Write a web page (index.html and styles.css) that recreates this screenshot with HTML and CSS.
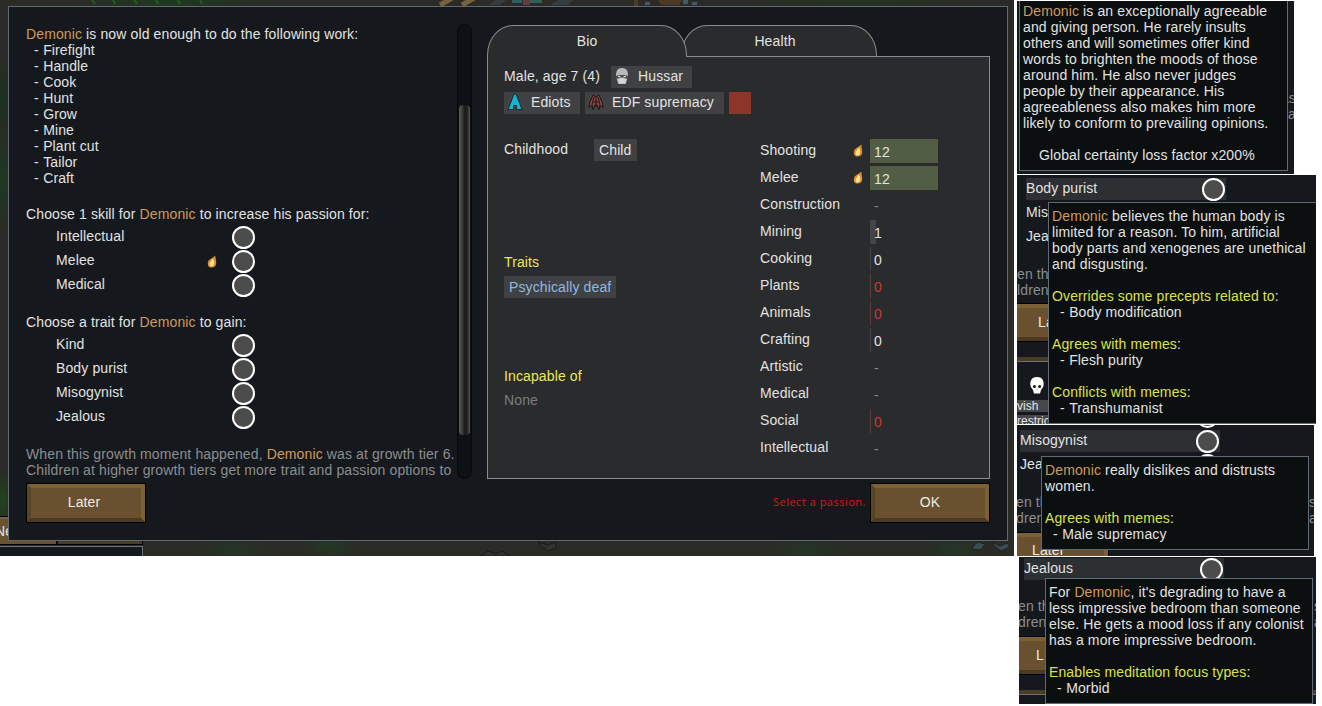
FILE: index.html
```html
<!DOCTYPE html>
<html lang="en">

<head>
    <meta charset="UTF-8">
    <meta name="viewport" content="width=device-width, initial-scale=1.0">
    <title>Growth moment</title>
    <link rel="stylesheet" href="styles.css">
</head>

<body>
    <!-- shared icons -->
    <svg class="defs" width="0" height="0">
        <symbol id="flame" viewBox="0 0 10 13">
            <path d="M8.600 .4 C8 2 9 3 8.800 5 C9.800 8 9.400 12.400 4.800 12.600 C.6 12.600 0 8.400 1.600 5.400 C3.400 3.400 6.600 2.400 8.600 .4z" fill="#e08c30" />
            <path d="M5.600 3.600 C7.800 6 8 11.400 4.800 11.400 C1.800 11.400 2.200 8 4 6.200z" fill="#fbe38e" />
        </symbol>
        <symbol id="skull" viewBox="0 0 16 19">
            <path d="M8 1 C13 1 15 4.500 14.600 9 C14.400 12 12.600 12.600 12 14 L11 17.500 H5 L4 14 C3.400 12.600 1.600 12 1.400 9 C1 4.500 3 1 8 1z" fill="#fff" />
            <circle cx="5.400" cy="10.500" r="1.500" fill="#15191d" />
            <circle cx="10.600" cy="10.500" r="1.500" fill="#15191d" />
            <path d="M8 12.500 V14" stroke="#999" />
        </symbol>
    </svg>

    <main class="scene">
        <svg class="map" width="1014" height="556" viewBox="0 0 1014 556">
            <path d="M92 0 l3 4 M113 0 l2 4 M134 0 l3 4 M156 0 l2 4 M178 0 l2 4 M200 0 l2 4" stroke="#265a23" stroke-width="2" />
            <path d="M440 5 l14 -8 M462 5 l14 -8" stroke="#76633d" stroke-width="5" />
            <path d="M488 5 l8 -5 10 0 -6 5z M550 5 l10 -6 14 0 -6 6z" fill="#343c3f" />
            <path d="M512 0 h10 v3 h-10z M530 0 h12 v3 h-12z" fill="#2f5e5c" />
            <path d="M523 0 h7 v5 h-7z" fill="#643c39" />
            <path d="M658 0 h24 l-3 5 h-18z M634 0 h4 v6 h-4z" fill="#4c3a27" />
            <path d="M645 2 h5 v3 h-5z M683 0 h5 v4 h-5z M692 2 h5 v3 h-5z" fill="#465865" />
            <path d="M538 542 l10 3 8 -3 v6 l-8 3 -6 -4z M480 556 l8 -5 8 3 6 -3 8 5z" fill="#30322f" stroke="#171a18" />
            <path d="M973 546 l5 -4 7 2 -4 6 -9 -1z M992 542 l8 4 7 -3 3 4 -9 4 -6 -4z" fill="#3c4a52" stroke="#1b2022" />
        </svg>
        <div class="hud">
            <div class="hud-tabs"><span class="hud-tab">Ne</span><span class="hud-tab"></span></div>
            <div class="hud-pane"></div>
        </div>

        <section class="dialog">
            <div class="columns">
                <div class="letter">
                    <div class="letter-text">
                        <p><em>Demonic</em> is now old enough to do the following work:</p>
                        <ul class="dashes">
                            <li>Firefight</li>
                            <li>Handle</li>
                            <li>Cook</li>
                            <li>Hunt</li>
                            <li>Grow</li>
                            <li>Mine</li>
                            <li>Plant cut</li>
                            <li>Tailor</li>
                            <li>Craft</li>
                        </ul>
                        <p class="question">Choose 1 skill for <em>Demonic</em> to increase his passion for:</p>
                        <div class="options">
                            <div class="option"><span>Intellectual</span><i class="radio"></i></div>
                            <div class="option"><span>Melee</span><svg class="flame"><use href="#flame" /></svg><i class="radio"></i></div>
                            <div class="option"><span>Medical</span><i class="radio"></i></div>
                        </div>
                        <p class="question second">Choose a trait for <em>Demonic</em> to gain:</p>
                        <div class="options">
                            <div class="option"><span>Kind</span><i class="radio"></i></div>
                            <div class="option"><span>Body purist</span><i class="radio"></i></div>
                            <div class="option"><span>Misogynist</span><i class="radio"></i></div>
                            <div class="option"><span>Jealous</span><i class="radio"></i></div>
                        </div>
                        <p class="note">When this growth moment happened, <em>Demonic</em> was at growth tier 6.<br>Children at higher growth tiers get more trait and passion options to</p>
                    </div>
                    <div class="scrollbar"><div class="thumb"></div></div>
                </div>

                <div class="card">
                    <div class="tabs">
                        <div class="tab active">Bio</div>
                        <div class="tab">Health</div>
                    </div>
                    <div class="panel">
                        <div class="bio">
                            <div class="row">
                                <span class="age">Male, age 7 (4)</span>
                                <span class="chip">
                                    <svg width="16" height="18" viewBox="0 0 16 18">
                                        <path d="M8 1 C12.500 1 14 4 14 8 L13 13 L11.500 17 H4.500 L3 13 L2 8 C2 4 3.500 1 8 1z" fill="#b9b9b9" />
                                        <path d="M1.500 9 C5 7.500 11 7.500 14.500 9 L13 12 L10 10.500 H6 L3 12z" fill="#4b4b4b" />
                                        <path d="M4 9.500 H6.500 M9.500 9.500 H12" stroke="#ddd" />
                                        <path d="M4.500 12 L8 11 L11.500 12 V16.500 H4.500z" fill="#d4d4d4" />
                                    </svg>Hussar</span>
                            </div>
                            <div class="row">
                                <span class="chip ediots">
                                    <svg width="16" height="18" viewBox="0 0 16 18">
                                        <path d="M7 1 H9 L15 16.500 H9.500 V12.500 H6.500 V16.500 H1z" fill="#14b4d2" stroke="#172a30" />
                                    </svg>Ediots</span>
                                <span class="chip edf">
                                    <svg width="16" height="18" viewBox="0 0 16 18">
                                        <path d="M5 2 L8 4 L11 2 L14.500 10 L15 15 L12 12 L11 16.500 L9 12 H7 L5 16.500 L4 12 L1 15 L1.500 10z" fill="#8a4440" stroke="#1d1515" />
                                        <path d="M8 4 V14 M6 4 L4 12 M10 4 L12 12 M5.500 9 H10.500" stroke="#1d1515" fill="none" />
                                    </svg>EDF supremacy</span>
                                <span class="swatch"></span>
                            </div>
                            <div class="row childhood"><span class="age">Childhood</span><span class="chip">Child</span></div>
                            <h2 class="traits">Traits</h2>
                            <div class="row"><span class="chip trait">Psychically deaf</span></div>
                            <h2 class="incapable">Incapable of</h2>
                            <p class="none">None</p>
                        </div>

                        <div class="skills">
                            <div class="skill"><label>Shooting</label><svg class="flame"><use href="#flame" /></svg><span class="level high">12</span></div>
                            <div class="skill"><label>Melee</label><svg class="flame"><use href="#flame" /></svg><span class="level high">12</span></div>
                            <div class="skill"><label>Construction</label><span class="level off">-</span></div>
                            <div class="skill"><label>Mining</label><span class="level one">1</span></div>
                            <div class="skill"><label>Cooking</label><span class="level zero">0</span></div>
                            <div class="skill"><label>Plants</label><span class="level bad">0</span></div>
                            <div class="skill"><label>Animals</label><span class="level bad">0</span></div>
                            <div class="skill"><label>Crafting</label><span class="level zero">0</span></div>
                            <div class="skill"><label>Artistic</label><span class="level off">-</span></div>
                            <div class="skill"><label>Medical</label><span class="level off">-</span></div>
                            <div class="skill"><label>Social</label><span class="level bad">0</span></div>
                            <div class="skill"><label>Intellectual</label><span class="level off">-</span></div>
                        </div>
                    </div>
                </div>
            </div>

            <footer class="buttons">
                <button class="btn">Later</button>
                <span class="warning">Select a passion.</span>
                <button class="btn">OK</button>
            </footer>
        </section>
    </main>

    <aside class="shots">
        <div class="shot kind">
            <p class="edge">as<br>pa</p>
            <div class="tooltip">
                <p><em>Demonic</em> is an exceptionally agreeable<br>and giving person. He rarely insults<br>others and will sometimes offer kind<br>words to brighten the moods of those<br>around him. He also never judges<br>people by their appearance. His<br>agreeableness also makes him more<br>likely to conform to prevailing opinions.</p>
                <p class="factor">Global certainty loss factor x200%</p>
            </div>
        </div>

        <div class="shot purist">
            <div class="options">
                <div class="option hover"><span>Body purist</span><i class="radio"></i></div>
                <div class="option"><span>Mis</span></div>
                <div class="option"><span>Jea</span></div>
            </div>
            <p class="note">en th<br>ldren</p>
            <div class="btn stub">La</div>
            <div class="under">
                <svg class="skull" width="16" height="19"><use href="#skull" /></svg>
                <span class="tag">vish</span>
                <span class="tag">restric</span>
            </div>
            <div class="tooltip">
                <p><em>Demonic</em> believes the human body is<br>limited for a reason. To him, artificial<br>body parts and xenogenes are unethical<br>and disgusting.</p>
                <h3><b>Overrides some precepts related to</b>:</h3>
                <ul class="dashes"><li>Body modification</li></ul>
                <h3><b>Agrees with memes</b>:</h3>
                <ul class="dashes"><li>Flesh purity</li></ul>
                <h3><b>Conflicts with memes</b>:</h3>
                <ul class="dashes"><li>Transhumanist</li></ul>
            </div>
        </div>

        <div class="shot misogynist">
            <i class="radio above"></i>
            <div class="options">
                <div class="option hover"><span>Misogynist</span><i class="radio"></i></div>
                <div class="option"><span>Jea</span><i class="radio"></i></div>
            </div>
            <div class="note split"><p>en th<br>dren</p><p>s<br>a</p></div>
            <div class="btn stub">Later</div>
            <div class="tooltip">
                <p><em>Demonic</em> really dislikes and distrusts<br>women.</p>
                <h3><b>Agrees with memes</b>:</h3>
                <ul class="dashes"><li>Male supremacy</li></ul>
            </div>
        </div>

        <div class="shot jealous">
            <div class="options">
                <div class="option hover"><span>Jealous</span><i class="radio"></i></div>
            </div>
            <div class="note split"><p>en th<br>dren</p><p>s<br>a</p></div>
            <div class="btn stub">L</div>
            <div class="under"></div>
            <div class="tooltip">
                <p>For <em>Demonic</em>, it's degrading to have a<br>less impressive bedroom than someone<br>else. He gets a mood loss if any colonist<br>has a more impressive bedroom.</p>
                <h3><b>Enables meditation focus types</b>:</h3>
                <ul class="dashes"><li>Morbid</li></ul>
            </div>
        </div>
    </aside>
</body>

</html>
```
FILE: styles.css
```css
/* General Reset */
* {
    margin: 0;
    padding: 0;
    box-sizing: border-box;
}

body {
    display: flex;
    align-items: flex-start;
    gap: 3px;
    width: 1322px;
    height: 706px;
    overflow: hidden;
    background: #fff;
    color: #e2e2e2;
    font: 14px/16px "Liberation Sans", Arial, sans-serif;
    letter-spacing: 0.12px;
    white-space: nowrap;
}

em {
    font-style: normal;
    color: #d09a5a;
}

h2,
h3,
b {
    font-size: inherit;
    font-weight: normal;
}

ul {
    list-style: none;
}

.dashes {
    padding-left: 8px;
}

.dashes li::before {
    content: '- ';
    letter-spacing: 0.3px;
}

.defs {
    position: absolute;
}

/* Map behind the dialog */
.scene {
    position: relative;
    width: 1014px;
    height: 556px;
    padding: 6px 6px 15px 8px;
    overflow: hidden;
    background:
        radial-gradient(60px 14px at 60px 3px, #2b2d26, transparent),
        radial-gradient(110px 12px at 170px 2px, #1d3a1d, transparent),
        radial-gradient(120px 12px at 860px 3px, #23341f, transparent),
        radial-gradient(10px 40px at 3px 100px, #1b3320, transparent),
        radial-gradient(10px 50px at 3px 180px, #1c3a22, transparent),
        radial-gradient(10px 30px at 3px 500px, #21451c, transparent),
        radial-gradient(40px 14px at 235px 549px, #243525, transparent),
        radial-gradient(30px 14px at 330px 545px, #223a24, transparent),
        radial-gradient(40px 14px at 805px 549px, #243525, transparent),
        radial-gradient(30px 14px at 955px 549px, #243725, transparent),
        #2a2b26;
}

.map {
    position: absolute;
    top: 0;
    left: 0;
}

.hud {
    position: absolute;
    left: 0;
    bottom: 0;
    width: 143px;
    height: 40px;
    display: flex;
    flex-direction: column;
}

.hud-tabs {
    display: flex;
    height: 29px;
    border: 1px solid #000;
    border-left: none;
}

.hud-tab {
    width: 58px;
    padding-top: 4px;
    background: #6a5130;
    border-top: 2px solid #7e6237;
    border-right: 2px solid #000;
    text-indent: -5px;
}

.hud-tab:last-child {
    flex: 1;
    border-right: none;
    background: #4b3b25;
}

.hud-pane {
    flex: 1;
    margin-top: 1px;
    border: 1px solid #68737c;
    border-width: 1px 1px 0 0;
    background: #15191d;
}

/* Dialog */
.dialog {
    position: relative;
    width: 1000px;
    height: 535px;
    padding: 17px;
    background: #15191d;
    border: 1px solid #5f6a72;
}

.columns {
    display: flex;
    gap: 15px;
    height: 455px;
}

.letter {
    display: flex;
    justify-content: space-between;
    width: 446px;
}

.letter-text {
    width: 431px;
    padding-top: 2px;
}

.question {
    margin-top: 20px;
}

.question.second {
    margin-top: 18px;
}

.options {
    display: flex;
    flex-direction: column;
    gap: 2px;
    margin-left: 30px;
    padding-top: 4px;
}

.option {
    display: flex;
    align-items: center;
    width: 200px;
    height: 22px;
}

.option span {
    margin-top: -2px;
}

.option .flame {
    margin-left: auto;
    margin-right: 15px;
}

.option .flame + .radio {
    margin-left: 0;
}

.option.hover {
    background: #2d3033;
}

.radio {
    flex: none;
    width: 23px;
    height: 23px;
    margin: -1px 1px -1px auto;
    border: 2px solid #fff;
    border-radius: 50%;
    background: #4c4c4c;
}

.flame {
    flex: none;
    width: 10px;
    height: 13px;
}

.note {
    margin-top: 18px;
    color: #8b8d8f;
}

.scrollbar {
    width: 15px;
    padding: 80px 2px 0;
    border: 1px solid #06080a;
    border-radius: 8px;
    background: #0d1113;
}

.thumb {
    width: 11px;
    height: 330px;
    margin-left: -1px;
    border-radius: 4px;
    background: linear-gradient(90deg, #5c5c5c, #3a3a3a 30%, #181818 55%, #222 75%, #555);
}

/* Character card */
.card {
    display: flex;
    flex-direction: column;
    width: 503px;
    padding-top: 1px;
}

.tabs {
    display: flex;
    height: 32px;
    margin-bottom: -1px;
}

.tab {
    width: 196px;
    margin-left: -6px;
    padding: 7px 8px 0 0;
    text-align: center;
    background: #2a2b2c;
    border: 1px solid #8a8b8c;
    border-radius: 26px 26px 0 0 / 30px 30px 0 0;
}

.tab.active {
    position: relative;
    z-index: 1;
    width: 200px;
    margin-left: 0;
    padding-right: 0;
    border-bottom: none;
}

.panel {
    display: flex;
    flex: 1;
    padding: 9px 16px;
    background: #2a2b2c;
    border: 1px solid #8a8b8c;
}

.bio {
    width: 256px;
}

.row {
    display: flex;
    align-items: center;
    gap: 5px;
    height: 22px;
    margin-bottom: 4px;
}

.age {
    width: 102px;
    margin-top: -2px;
}

.chip {
    display: flex;
    align-items: center;
    gap: 8px;
    height: 22px;
    padding: 0 9px 2px 3px;
    background: #3f4142;
}

.chip.ediots {
    width: 76px;
}

.chip.edf {
    width: 139px;
}

.childhood {
    margin-top: 25px;
}

.childhood .age {
    width: 85px;
}

.childhood .chip,
.chip.trait {
    padding: 0 5px 1px;
}

.chip.trait {
    color: #8fb8e0;
}

.swatch {
    width: 22px;
    height: 22px;
    background: #8e3529;
}

h2 {
    color: #e8e85a;
}

.traits {
    margin: 93px 0 6px;
}

.incapable {
    margin: 70px 0 8px;
}

.none {
    color: #7c7d7e;
}

.skills {
    display: flex;
    flex-direction: column;
    gap: 3px;
    padding-top: 73px;
}

.skill {
    display: flex;
    width: 178px;
    height: 24px;
}

.skill label {
    width: 93px;
    padding-top: 3px;
}

.skill .flame {
    margin: 5px 7px 0 0;
}

.skill .level {
    width: 68px;
    margin-left: auto;
    padding: 5px 0 0 4px;
}

.skill .flame + .level {
    margin-left: 0;
}

.level.high {
    background: #515e45;
}

.level.off {
    color: #85878a;
}

.level.one {
    background: linear-gradient(90deg, #424446 6px, transparent 6px);
}

.level.zero {
    background: linear-gradient(90deg, #424446 1px, transparent 1px);
}

.level.bad {
    color: #c93a3a;
    background: linear-gradient(90deg, #5c3c3f 1px, transparent 1px);
}

/* Buttons */
.buttons {
    display: flex;
    align-items: center;
    height: 40px;
    margin-top: 4px;
}

.btn {
    width: 120px;
    height: 40px;
    padding: 0 4px 3px 0;
    border: 5px solid;
    border-color: #7d6136 #7d6136 #4c391f #594425;
    outline: 1px solid #000;
    outline-offset: -1px;
    background: #69502e;
    color: #f0ece4;
    font: inherit;
    letter-spacing: inherit;
}

.btn:last-child {
    padding-right: 0;
}

.warning {
    margin-left: auto;
    margin-right: 4px;
    padding-bottom: 2px;
    color: #d81818;
    font: 11px/16px "Open Sans", sans-serif;
    letter-spacing: 0.5px;
}

/* Trait tooltips */
.shots {
    display: flex;
    flex-direction: column;
    gap: 1px;
    padding-top: 1px;
}

.shot {
    position: relative;
    width: 299px;
    overflow: hidden;
    background: #15191d;
}

.shot .option {
    flex: none;
}

.shot .options {
    padding-top: 0;
    margin-left: 9px;
}

.tooltip {
    position: absolute;
    width: 269px;
    padding: 5px 3px;
    background: #0b0f10;
    border: 1px solid #5f6a72;
}

.tooltip h3 {
    margin-top: 16px;
}

.tooltip b {
    color: #dde04e;
}

.kind {
    width: 277px;
    height: 173px;
}

.kind .tooltip {
    top: -4px;
    left: 2px;
    height: 174px;
}

.factor {
    margin: 16px 0 0 16px;
}

.edge {
    margin: 89px -2px 0 0;
    text-align: right;
    color: #8b8d8f;
}

.purist {
    height: 249px;
    padding-top: 3px;
}

.purist .tooltip {
    top: 27px;
    left: 31px;
    height: 222px;
}

.stub {
    width: 99px;
    height: 39px;
    margin: 5px 0 0 -1px;
    padding: 6px 0 0 22px;
    border-left: none;
}

.under {
    display: flex;
    flex-direction: column;
    margin-top: 19px;
    padding-top: 7px;
    border-top: 1px solid #68737c;
    box-shadow: 0 6px 0 -1px #15191d, 0 -4px 0 #4b3b25;
}

.skull {
    margin: 7px 0 5px 12px;
}

.tag {
    width: 40px;
    height: 12px;
    margin-bottom: 3px;
    background: #45474a;
    font-size: 12px;
    line-height: 12px;
    letter-spacing: 0;
}

.misogynist {
    width: 297px;
    height: 131px;
    padding-top: 5px;
}

.misogynist .tooltip {
    top: 31px;
    left: 24px;
    width: 268px;
    height: 94px;
}

.misogynist .options {
    margin-left: 3px;
}

.radio.above {
    position: absolute;
    top: -19px;
    left: 179px;
}

.split {
    display: flex;
    justify-content: space-between;
    margin-left: -1px;
    margin-right: -3px;
}

.jealous .split {
    margin-right: -6px;
}

.misogynist .stub {
    width: 93px;
    margin-top: 6px;
    padding: 5px 0 0 16px;
}

.jealous {
    width: 297px;
    height: 147px;
    margin-left: 2px;
    padding-top: 1px;
}

.jealous .options {
    margin-left: 5px;
}

.jealous .tooltip {
    top: 21px;
    left: 26px;
    width: 268px;
    height: 126px;
}

.jealous .stub {
    margin-top: 6px;
    padding-left: 18px;
}
```
